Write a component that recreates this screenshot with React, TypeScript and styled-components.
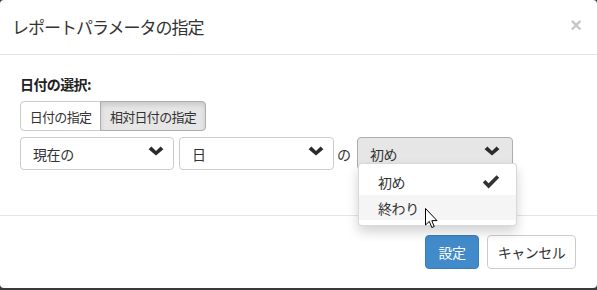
import React from "react";
import styled, { createGlobalStyle } from "styled-components";

const Global = createGlobalStyle`
  html, body { margin: 0; padding: 0; background: #3a3a3a; }
  body {
    font-family: "Noto Sans CJK JP", "Noto Sans", sans-serif;
    color: #333;
    -webkit-font-smoothing: antialiased;
  }
  * { box-sizing: border-box; }
`;

const Modal = styled.div`
  width: 597px;
  height: 288px;
  background: #fff;
  border-radius: 4px;
  display: flex;
  flex-direction: column;
  position: relative;
`;

const Header = styled.div`
  height: 55px;
  border-bottom: 1px solid #e5e5e5;
  display: flex;
  align-items: center;
  justify-content: space-between;
  padding: 0 15px 0 12px;
`;

const Title = styled.h4`
  margin: 0;
  font-size: 17px;
  font-weight: 400;
  letter-spacing: -1px;
  line-height: 24px;
  color: #333;
`;

const Close = styled.span`
  font-family: "Liberation Sans", Arial, sans-serif;
  font-size: 20px;
  font-weight: 700;
  color: #000;
  opacity: 0.22;
  line-height: 1;
  margin-top: -4px;
`;

const Body = styled.div`
  padding: 19px 20px 0 20px;
  height: 161px;
  border-bottom: 1px solid #e5e5e5;
`;

const Label = styled.div`
  font-size: 14px;
  font-weight: 700;
  line-height: 20px;
  letter-spacing: -0.6px;
  margin-bottom: 7px;
  color: #222;
`;

const Group = styled.div`
  display: inline-flex;
  margin-bottom: 6px;
`;

const GroupButton = styled.button<{ $active?: boolean; $w: number }>`
  width: ${(p) => p.$w}px;
  height: 30px;
  padding: 0;
  font-family: inherit;
  font-size: 13px;
  letter-spacing: -0.7px;
  color: #333;
  background: ${(p) => (p.$active ? "#e6e6e6" : "#fff")};
  border: 1px solid ${(p) => (p.$active ? "#adadad" : "#ccc")};
  box-shadow: ${(p) => (p.$active ? "inset 0 3px 5px rgba(0,0,0,.125)" : "none")};
  &:first-child { border-radius: 4px 0 0 4px; }
  &:last-child { border-radius: 0 4px 4px 0; margin-left: -1px; }
`;

const Row = styled.div`
  display: flex;
  align-items: center;
`;

const SelectWrap = styled.div<{ $w: number; $ml: number }>`
  position: relative;
  width: ${(p) => p.$w}px;
  margin-left: ${(p) => p.$ml}px;
`;

const SelectBox = styled.div<{ $open?: boolean; $pr?: number }>`
  height: 33px;
  border: 1px solid ${(p) => (p.$open ? "#adadad" : "#ccc")};
  border-radius: 4px;
  background: ${(p) => (p.$open ? "#e6e6e6" : "#fff")};
  display: flex;
  align-items: center;
  justify-content: space-between;
  padding: 0 ${(p) => p.$pr ?? 9}px 0 12px;
  font-size: 14px;
  letter-spacing: -0.4px;
  color: #333;
`;

const Chevron = styled.svg`
  width: 16px;
  height: 10px;
  margin-top: -6px;
`;

const Of = styled.span`
  font-size: 14px;
  margin-left: 3px;
  margin-right: 6px;
  color: #333;
`;

const Menu = styled.div`
  position: absolute;
  top: 26px;
  left: 1px;
  width: 159px;
  background: #fff;
  border: 1px solid rgba(0, 0, 0, 0.15);
  border-radius: 4px;
  box-shadow: 0 6px 12px rgba(0, 0, 0, 0.175);
  padding: 5px 0 5px 0;
  z-index: 5;
`;

const Item = styled.div<{ $hover?: boolean }>`
  height: 25px;
  display: flex;
  align-items: center;
  justify-content: space-between;
  padding: 0 16px 0 19px;
  font-size: 14px;
  letter-spacing: -0.4px;
  color: #333;
  background: ${(p) => (p.$hover ? "#f5f5f5" : "transparent")};
  &:first-child { height: 26px; }
`;

const Check = styled.svg`
  width: 18px;
  height: 14px;
`;

const Footer = styled.div`
  display: flex;
  justify-content: flex-end;
  gap: 8px;
  padding: 19px 21px 0 0;
`;

const Btn = styled.button<{ $primary?: boolean; $w: number }>`
  width: ${(p) => p.$w}px;
  height: 34px;
  font-family: inherit;
  font-size: 14px;
  letter-spacing: -0.5px;
  border-radius: 4px;
  color: ${(p) => (p.$primary ? "#fff" : "#333")};
  background: ${(p) => (p.$primary ? "#428bca" : "#fff")};
  border: 1px solid ${(p) => (p.$primary ? "#357ebd" : "#ccc")};
  padding: 0;
`;

const Cursor = styled.svg`
  position: absolute;
  left: 425px;
  top: 208px;
  width: 13px;
  height: 21px;
  z-index: 10;
`;

const ChevronIcon = () => (
  <Chevron viewBox="0 0 16 10">
    <path d="M0.6 3.2 L3.4 0.4 L8 5 L12.6 0.4 L15.4 3.2 L8 9.6 Z" fill="#2b2b2b" />
  </Chevron>
);

export default function App() {
  return (
    <>
      <Global />
      <Modal>
        <Header>
          <Title>レポートパラメータの指定</Title>
          <Close>×</Close>
        </Header>
        <Body>
          <Label>日付の選択:</Label>
          <Group>
            <GroupButton $w={81}>日付の指定</GroupButton>
            <GroupButton $w={106} $active>相対日付の指定</GroupButton>
          </Group>
          <Row>
            <SelectWrap $w={154} $ml={0}>
              <SelectBox>
                現在の
                <ChevronIcon />
              </SelectBox>
            </SelectWrap>
            <SelectWrap $w={155} $ml={5}>
              <SelectBox>
                日
                <ChevronIcon />
              </SelectBox>
            </SelectWrap>
            <Of>の</Of>
            <SelectWrap $w={156} $ml={0}>
              <SelectBox $open $pr={12}>
                初め
                <ChevronIcon />
              </SelectBox>
              <Menu>
                <Item>
                  初め
                  <Check viewBox="0 0 18 14">
                    <path d="M0.8 7.6 L3.4 5 L6.6 8.2 L14.6 0.2 L17.2 2.8 L6.6 13.4 Z" fill="#333" />
                  </Check>
                </Item>
                <Item $hover>終わり</Item>
              </Menu>
            </SelectWrap>
          </Row>
        </Body>
        <Footer>
          <Btn $primary $w={54}>設定</Btn>
          <Btn $w={89}>キャンセル</Btn>
        </Footer>
        <Cursor viewBox="0 0 13 21">
          <path
            d="M0.5 0.5 L0.5 17 L4.3 13.4 L6.8 19.5 L9.2 18.5 L6.8 12.6 L12 12.6 Z"
            fill="#fff"
            stroke="#000"
            strokeWidth="1"
            strokeLinejoin="round"
          />
        </Cursor>
      </Modal>
    </>
  );
}
